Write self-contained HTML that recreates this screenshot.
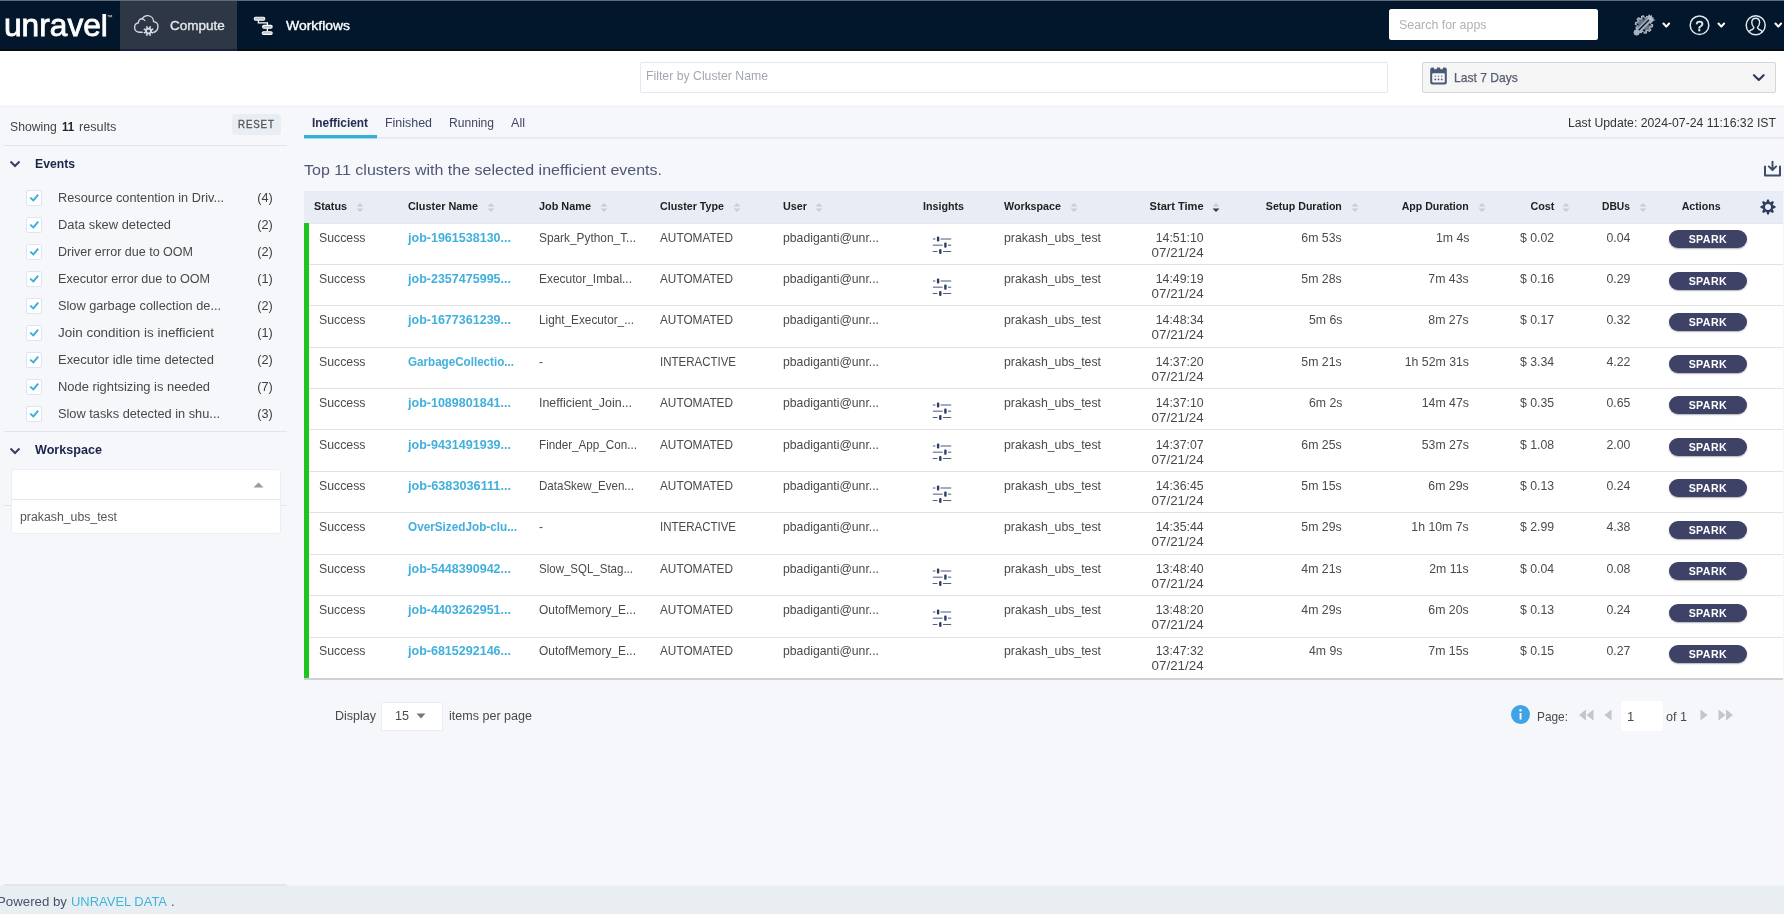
<!DOCTYPE html>
<html lang="en"><head><meta charset="utf-8"><title>Unravel - Compute</title>
<style>
html,body{margin:0;padding:0}
body{width:1784px;height:914px;position:relative;overflow:hidden;background:#f5f7fb;font-family:"Liberation Sans",Arial,sans-serif}
.t{position:absolute;white-space:nowrap;line-height:1;display:block;filter:blur(.35px)}
svg.b{filter:blur(.3px)}
.b{position:absolute;display:block}
</style></head><body>
<div class="b" style="left:0px;top:0px;width:1784px;height:51px;background:#02172c;"></div>
<div class="b" style="left:0px;top:0px;width:1784px;height:1px;background:#5f6b78;"></div>
<div class="b" style="left:120px;top:1px;width:117px;height:48px;background:#2e3745;"></div>
<div class="b" style="left:0px;top:49px;width:1784px;height:2px;background:#070e14;"></div>
<div class="b" style="left:120px;top:49px;width:117px;height:2px;background:#1b1c40;"></div>
<span class="t" style="top:10.00px;font-size:31px;color:#fff;left:3.90px;transform-origin:0 50%;transform:scaleX(1.0219);-webkit-text-stroke:0.8px #fff;">unravel</span>
<div class="b" style="left:100.5px;top:8px;width:5.8px;height:5.7px;background:#02172c;"></div>
<span class="t" style="top:13.92px;font-size:6px;color:#dfe3e8;left:106.50px;transform-origin:0 50%;">™</span>
<span class="t" style="top:19.00px;font-size:13px;color:#e4e7eb;left:170.00px;transform-origin:0 50%;transform:scaleX(1.0389);-webkit-text-stroke:0.35px #e4e7eb;">Compute</span>
<span class="t" style="top:19.00px;font-size:13px;color:#fff;left:286.00px;transform-origin:0 50%;transform:scaleX(1.0718);-webkit-text-stroke:0.35px #fff;">Workflows</span>
<div class="b" style="left:1389.3px;top:8.6px;width:208.6px;height:31.7px;background:#fff;border-radius:2.5px;"></div>
<span class="t" style="top:18.00px;font-size:13px;color:#b0b2b6;left:1399.00px;transform-origin:0 50%;transform:scaleX(0.9534);">Search for apps</span>
<div class="b" style="left:0px;top:51px;width:1784px;height:55px;background:#fff;"></div>
<div class="b" style="left:640px;top:62px;width:748px;height:31px;background:#fff;border:1px solid #e2e9f3;border-radius:2px;box-sizing:border-box;"></div>
<span class="t" style="top:69.00px;font-size:13px;color:#a3a8b0;left:646.00px;transform-origin:0 50%;transform:scaleX(0.9435);">Filter by Cluster Name</span>
<div class="b" style="left:1422px;top:62px;width:354px;height:31px;background:#f5f5f5;border:1px solid #d6d6d6;border-radius:2px;box-sizing:border-box;"></div>
<span class="t" style="top:71.00px;font-size:13px;color:#555b75;left:1454.30px;transform-origin:0 50%;transform:scaleX(0.9280);-webkit-text-stroke:0.25px #555b75;">Last 7 Days</span>
<div class="b" style="left:0px;top:106px;width:1784px;height:808px;background:#f5f7fb;"></div>
<div class="b" style="left:0px;top:105px;width:1784px;height:1px;background:#f4f6fa;"></div>
<div class="b" style="left:0px;top:106px;width:1784px;height:1px;background:#f1f3f8;"></div>
<div class="b" style="left:0px;top:885px;width:1784px;height:1px;background:#eff2f6;"></div>
<div class="b" style="left:0px;top:886px;width:1784px;height:28px;background:#e9eef2;"></div>
<div class="b" style="left:4px;top:884px;width:283px;height:2px;background:#e3e5ea;"></div>
<span class="t" style="top:895.00px;font-size:13px;color:#4a4f6a;left:-3.00px;transform-origin:0 50%;transform:scaleX(1.0196);">Powered by</span>
<span class="t" style="top:895.00px;font-size:13px;color:#3fb4dc;left:71.00px;transform-origin:0 50%;transform:scaleX(0.9967);">UNRAVEL DATA</span>
<span class="t" style="top:895.00px;font-size:13px;color:#4a4f6a;left:171.00px;transform-origin:0 50%;">.</span>
<span class="t" style="top:121.00px;font-size:12px;color:#444;left:10.40px;transform-origin:0 50%;transform:scaleX(1.0167);">Showing</span>
<span class="t" style="top:121.00px;font-size:12px;color:#222;font-weight:700;left:62.00px;transform-origin:0 50%;transform:scaleX(0.9459);">11</span>
<span class="t" style="top:121.00px;font-size:12px;color:#444;left:78.70px;transform-origin:0 50%;transform:scaleX(1.0553);">results</span>
<div class="b" style="left:232px;top:114px;width:49px;height:21px;background:#e9eef4;border-radius:3px;"></div>
<span class="t" style="top:119.00px;font-size:10.5px;color:#555;left:238.00px;transform-origin:0 50%;transform:scaleX(0.9300);letter-spacing:0.9px;-webkit-text-stroke:0.3px #555;">RESET</span>
<div class="b" style="left:4px;top:145px;width:283px;height:1px;background:#e2e5ea;"></div>
<span class="t" style="top:157.00px;font-size:13px;color:#1b2348;font-weight:700;left:34.50px;transform-origin:0 50%;transform:scaleX(0.9382);">Events</span>
<div class="b" style="left:26px;top:190px;width:16px;height:16px;background:#fff;border:1px solid #dfe5ef;box-sizing:border-box;border-radius:2px;"></div>
<svg class="b" style="left:28px;top:191px" width="13" height="13" viewBox="0 0 13 13"><path d="M2.2 6.6 L5.4 9.4 L10.2 3.7" fill="none" stroke="#35aedb" stroke-width="1.9"/></svg>
<span class="t" style="top:192.00px;font-size:12px;color:#484848;left:58.30px;transform-origin:0 50%;transform:scaleX(1.0606);">Resource contention in Driv...</span>
<span class="t" style="top:192.00px;font-size:12px;color:#404040;right:1511.00px;transform-origin:100% 50%;transform:scaleX(1.0568);">(4)</span>
<div class="b" style="left:26px;top:217px;width:16px;height:16px;background:#fff;border:1px solid #dfe5ef;box-sizing:border-box;border-radius:2px;"></div>
<svg class="b" style="left:28px;top:218px" width="13" height="13" viewBox="0 0 13 13"><path d="M2.2 6.6 L5.4 9.4 L10.2 3.7" fill="none" stroke="#35aedb" stroke-width="1.9"/></svg>
<span class="t" style="top:219.00px;font-size:12px;color:#484848;left:58.30px;transform-origin:0 50%;transform:scaleX(1.0722);">Data skew detected</span>
<span class="t" style="top:219.00px;font-size:12px;color:#404040;right:1511.00px;transform-origin:100% 50%;transform:scaleX(1.0568);">(2)</span>
<div class="b" style="left:26px;top:244px;width:16px;height:16px;background:#fff;border:1px solid #dfe5ef;box-sizing:border-box;border-radius:2px;"></div>
<svg class="b" style="left:28px;top:245px" width="13" height="13" viewBox="0 0 13 13"><path d="M2.2 6.6 L5.4 9.4 L10.2 3.7" fill="none" stroke="#35aedb" stroke-width="1.9"/></svg>
<span class="t" style="top:246.00px;font-size:12px;color:#484848;left:58.30px;transform-origin:0 50%;transform:scaleX(1.0435);">Driver error due to OOM</span>
<span class="t" style="top:246.00px;font-size:12px;color:#404040;right:1511.00px;transform-origin:100% 50%;transform:scaleX(1.0568);">(2)</span>
<div class="b" style="left:26px;top:271px;width:16px;height:16px;background:#fff;border:1px solid #dfe5ef;box-sizing:border-box;border-radius:2px;"></div>
<svg class="b" style="left:28px;top:272px" width="13" height="13" viewBox="0 0 13 13"><path d="M2.2 6.6 L5.4 9.4 L10.2 3.7" fill="none" stroke="#35aedb" stroke-width="1.9"/></svg>
<span class="t" style="top:273.00px;font-size:12px;color:#484848;left:58.30px;transform-origin:0 50%;transform:scaleX(1.0503);">Executor error due to OOM</span>
<span class="t" style="top:273.00px;font-size:12px;color:#404040;right:1511.00px;transform-origin:100% 50%;transform:scaleX(1.0568);">(1)</span>
<div class="b" style="left:26px;top:298px;width:16px;height:16px;background:#fff;border:1px solid #dfe5ef;box-sizing:border-box;border-radius:2px;"></div>
<svg class="b" style="left:28px;top:299px" width="13" height="13" viewBox="0 0 13 13"><path d="M2.2 6.6 L5.4 9.4 L10.2 3.7" fill="none" stroke="#35aedb" stroke-width="1.9"/></svg>
<span class="t" style="top:300.00px;font-size:12px;color:#484848;left:58.30px;transform-origin:0 50%;transform:scaleX(1.0624);">Slow garbage collection de...</span>
<span class="t" style="top:300.00px;font-size:12px;color:#404040;right:1511.00px;transform-origin:100% 50%;transform:scaleX(1.0568);">(2)</span>
<div class="b" style="left:26px;top:325px;width:16px;height:16px;background:#fff;border:1px solid #dfe5ef;box-sizing:border-box;border-radius:2px;"></div>
<svg class="b" style="left:28px;top:326px" width="13" height="13" viewBox="0 0 13 13"><path d="M2.2 6.6 L5.4 9.4 L10.2 3.7" fill="none" stroke="#35aedb" stroke-width="1.9"/></svg>
<span class="t" style="top:327.00px;font-size:12px;color:#484848;left:58.30px;transform-origin:0 50%;transform:scaleX(1.1207);">Join condition is inefficient</span>
<span class="t" style="top:327.00px;font-size:12px;color:#404040;right:1511.00px;transform-origin:100% 50%;transform:scaleX(1.0568);">(1)</span>
<div class="b" style="left:26px;top:352px;width:16px;height:16px;background:#fff;border:1px solid #dfe5ef;box-sizing:border-box;border-radius:2px;"></div>
<svg class="b" style="left:28px;top:353px" width="13" height="13" viewBox="0 0 13 13"><path d="M2.2 6.6 L5.4 9.4 L10.2 3.7" fill="none" stroke="#35aedb" stroke-width="1.9"/></svg>
<span class="t" style="top:354.00px;font-size:12px;color:#484848;left:58.30px;transform-origin:0 50%;transform:scaleX(1.0777);">Executor idle time detected</span>
<span class="t" style="top:354.00px;font-size:12px;color:#404040;right:1511.00px;transform-origin:100% 50%;transform:scaleX(1.0568);">(2)</span>
<div class="b" style="left:26px;top:379px;width:16px;height:16px;background:#fff;border:1px solid #dfe5ef;box-sizing:border-box;border-radius:2px;"></div>
<svg class="b" style="left:28px;top:380px" width="13" height="13" viewBox="0 0 13 13"><path d="M2.2 6.6 L5.4 9.4 L10.2 3.7" fill="none" stroke="#35aedb" stroke-width="1.9"/></svg>
<span class="t" style="top:381.00px;font-size:12px;color:#484848;left:58.30px;transform-origin:0 50%;transform:scaleX(1.0748);">Node rightsizing is needed</span>
<span class="t" style="top:381.00px;font-size:12px;color:#404040;right:1511.00px;transform-origin:100% 50%;transform:scaleX(1.0568);">(7)</span>
<div class="b" style="left:26px;top:406px;width:16px;height:16px;background:#fff;border:1px solid #dfe5ef;box-sizing:border-box;border-radius:2px;"></div>
<svg class="b" style="left:28px;top:407px" width="13" height="13" viewBox="0 0 13 13"><path d="M2.2 6.6 L5.4 9.4 L10.2 3.7" fill="none" stroke="#35aedb" stroke-width="1.9"/></svg>
<span class="t" style="top:408.00px;font-size:12px;color:#484848;left:58.30px;transform-origin:0 50%;transform:scaleX(1.0652);">Slow tasks detected in shu...</span>
<span class="t" style="top:408.00px;font-size:12px;color:#404040;right:1511.00px;transform-origin:100% 50%;transform:scaleX(1.0568);">(3)</span>
<div class="b" style="left:4px;top:431px;width:283px;height:1px;background:#e2e5ea;"></div>
<span class="t" style="top:443.00px;font-size:13px;color:#1b2348;font-weight:700;left:34.50px;transform-origin:0 50%;transform:scaleX(0.9692);">Workspace</span>
<svg class="b" style="left:9px;top:159px" width="12" height="10" viewBox="0 0 12 10"><path d="M1.5 2.5 L6 7 L10.5 2.5" fill="none" stroke="#353f60" stroke-width="2"/></svg>
<svg class="b" style="left:9px;top:446px" width="12" height="10" viewBox="0 0 12 10"><path d="M1.5 2.5 L6 7 L10.5 2.5" fill="none" stroke="#353f60" stroke-width="2"/></svg>
<div class="b" style="left:4px;top:505px;width:283px;height:1px;background:#e2e5ea;"></div>
<div class="b" style="left:11px;top:469px;width:270px;height:65px;background:#fff;border:1px solid #eceff4;box-sizing:border-box;border-radius:3px;"></div>
<div class="b" style="left:11px;top:499px;width:270px;height:1px;background:#e3e6ea;"></div>
<svg class="b" style="left:253px;top:482px" width="11" height="6" viewBox="0 0 11 6"><path d="M0.5 5.5 L5.5 0.5 L10.5 5.5 Z" fill="#9a9a9a"/></svg>
<span class="t" style="top:511.00px;font-size:12.5px;color:#555;left:19.50px;transform-origin:0 50%;transform:scaleX(0.9830);">prakash_ubs_test</span>
<div class="b" style="left:304px;top:137px;width:1480px;height:1px;background:#e5e7ec;"></div>
<div class="b" style="left:304px;top:138px;width:1480px;height:1px;background:#eceef3;"></div>
<div class="b" style="left:304px;top:135px;width:73px;height:3px;background:#36afda;"></div>
<div class="b" style="left:304px;top:138px;width:73px;height:1px;background:#a5d8ec;"></div>
<span class="t" style="top:117.00px;font-size:12px;color:#262d52;font-weight:700;left:312.00px;transform-origin:0 50%;transform:scaleX(0.9881);">Inefficient</span>
<span class="t" style="top:117.00px;font-size:12px;color:#3f4666;left:385.00px;transform-origin:0 50%;transform:scaleX(1.0362);">Finished</span>
<span class="t" style="top:117.00px;font-size:12px;color:#3f4666;left:449.00px;transform-origin:0 50%;transform:scaleX(1.0066);">Running</span>
<span class="t" style="top:117.00px;font-size:12px;color:#3f4666;left:511.00px;transform-origin:0 50%;transform:scaleX(1.0497);">All</span>
<span class="t" style="top:117.00px;font-size:12px;color:#333;right:8.00px;transform-origin:100% 50%;transform:scaleX(1.0200);">Last Update: 2024-07-24 11:16:32 IST</span>
<span class="t" style="top:162.00px;font-size:15px;color:#4f5676;left:304.00px;transform-origin:0 50%;transform:scaleX(1.0672);">Top 11 clusters with the selected inefficient events.</span>
<div class="b" style="left:304px;top:191px;width:1480px;height:32px;background:#e8edf5;"></div>
<div class="b" style="left:304px;top:223px;width:1480px;height:456px;background:#fff;"></div>
<div class="b" style="left:304px;top:223px;width:1480px;height:1px;background:#e3e7ee;"></div>
<div class="b" style="left:304px;top:223px;width:5px;height:1px;background:#7ed07e;"></div>
<div class="b" style="left:304px;top:223px;width:5px;height:456px;background:#1fc41f;"></div>
<div class="b" style="left:304px;top:678px;width:1480px;height:2px;background:#d0d0d0;"></div>
<span class="t" style="top:201.00px;font-size:11px;color:#222;font-weight:700;left:314.00px;transform-origin:0 50%;transform:scaleX(0.9816);">Status</span>
<svg class="b" style="left:356px;top:202px" width="8" height="11" viewBox="0 0 8 11"><path d="M0.5 4.5 L4 1 L7.5 4.5 Z" fill="#c9ccd3"/><path d="M0.5 6.5 L4 10 L7.5 6.5 Z" fill="#c9ccd3"/></svg>
<span class="t" style="top:201.00px;font-size:11px;color:#222;font-weight:700;left:408.00px;transform-origin:0 50%;transform:scaleX(0.9871);">Cluster Name</span>
<svg class="b" style="left:487px;top:202px" width="8" height="11" viewBox="0 0 8 11"><path d="M0.5 4.5 L4 1 L7.5 4.5 Z" fill="#c9ccd3"/><path d="M0.5 6.5 L4 10 L7.5 6.5 Z" fill="#c9ccd3"/></svg>
<span class="t" style="top:201.00px;font-size:11px;color:#222;font-weight:700;left:539.00px;transform-origin:0 50%;transform:scaleX(0.9891);">Job Name</span>
<svg class="b" style="left:600px;top:202px" width="8" height="11" viewBox="0 0 8 11"><path d="M0.5 4.5 L4 1 L7.5 4.5 Z" fill="#c9ccd3"/><path d="M0.5 6.5 L4 10 L7.5 6.5 Z" fill="#c9ccd3"/></svg>
<span class="t" style="top:201.00px;font-size:11px;color:#222;font-weight:700;left:660.00px;transform-origin:0 50%;transform:scaleX(0.9724);">Cluster Type</span>
<svg class="b" style="left:733px;top:202px" width="8" height="11" viewBox="0 0 8 11"><path d="M0.5 4.5 L4 1 L7.5 4.5 Z" fill="#c9ccd3"/><path d="M0.5 6.5 L4 10 L7.5 6.5 Z" fill="#c9ccd3"/></svg>
<span class="t" style="top:201.00px;font-size:11px;color:#222;font-weight:700;left:783.00px;transform-origin:0 50%;transform:scaleX(0.9812);">User</span>
<svg class="b" style="left:815px;top:202px" width="8" height="11" viewBox="0 0 8 11"><path d="M0.5 4.5 L4 1 L7.5 4.5 Z" fill="#c9ccd3"/><path d="M0.5 6.5 L4 10 L7.5 6.5 Z" fill="#c9ccd3"/></svg>
<span class="t" style="top:201.00px;font-size:11px;color:#222;font-weight:700;left:923.00px;transform-origin:0 50%;transform:scaleX(0.9723);">Insights</span>
<span class="t" style="top:201.00px;font-size:11px;color:#222;font-weight:700;left:1004.00px;transform-origin:0 50%;transform:scaleX(0.9745);">Workspace</span>
<svg class="b" style="left:1070px;top:202px" width="8" height="11" viewBox="0 0 8 11"><path d="M0.5 4.5 L4 1 L7.5 4.5 Z" fill="#c9ccd3"/><path d="M0.5 6.5 L4 10 L7.5 6.5 Z" fill="#c9ccd3"/></svg>
<span class="t" style="top:201.00px;font-size:11px;color:#222;font-weight:700;right:580.00px;transform-origin:100% 50%;transform:scaleX(1.0076);">Start Time</span>
<svg class="b" style="left:1212px;top:202px" width="8" height="11" viewBox="0 0 8 11"><path d="M0.5 4.5 L4 1 L7.5 4.5 Z" fill="#c9ccd3"/><path d="M0.5 6.5 L4 10 L7.5 6.5 Z" fill="#2e365a"/></svg>
<span class="t" style="top:201.00px;font-size:11px;color:#222;font-weight:700;right:442.00px;transform-origin:100% 50%;transform:scaleX(0.9641);">Setup Duration</span>
<svg class="b" style="left:1351px;top:202px" width="8" height="11" viewBox="0 0 8 11"><path d="M0.5 4.5 L4 1 L7.5 4.5 Z" fill="#c9ccd3"/><path d="M0.5 6.5 L4 10 L7.5 6.5 Z" fill="#c9ccd3"/></svg>
<span class="t" style="top:201.00px;font-size:11px;color:#222;font-weight:700;right:315.00px;transform-origin:100% 50%;transform:scaleX(0.9618);">App Duration</span>
<svg class="b" style="left:1478px;top:202px" width="8" height="11" viewBox="0 0 8 11"><path d="M0.5 4.5 L4 1 L7.5 4.5 Z" fill="#c9ccd3"/><path d="M0.5 6.5 L4 10 L7.5 6.5 Z" fill="#c9ccd3"/></svg>
<span class="t" style="top:201.00px;font-size:11px;color:#222;font-weight:700;right:230.00px;transform-origin:100% 50%;transform:scaleX(0.9818);">Cost</span>
<svg class="b" style="left:1562px;top:202px" width="8" height="11" viewBox="0 0 8 11"><path d="M0.5 4.5 L4 1 L7.5 4.5 Z" fill="#c9ccd3"/><path d="M0.5 6.5 L4 10 L7.5 6.5 Z" fill="#c9ccd3"/></svg>
<span class="t" style="top:201.00px;font-size:11px;color:#222;font-weight:700;right:154.00px;transform-origin:100% 50%;transform:scaleX(0.9349);">DBUs</span>
<svg class="b" style="left:1639px;top:202px" width="8" height="11" viewBox="0 0 8 11"><path d="M0.5 4.5 L4 1 L7.5 4.5 Z" fill="#c9ccd3"/><path d="M0.5 6.5 L4 10 L7.5 6.5 Z" fill="#c9ccd3"/></svg>
<span class="t" style="top:201.00px;font-size:11px;color:#222;font-weight:700;left:1680.83px;transform-origin:50% 50%;transform:scaleX(0.9668);">Actions</span>
<span class="t" style="top:231.00px;font-size:13px;color:#4a4a4a;left:319.00px;transform-origin:0 50%;transform:scaleX(0.9450);">Success</span>
<span class="t" style="top:231.00px;font-size:13px;color:#41b0dc;font-weight:700;left:408.00px;transform-origin:0 50%;transform:scaleX(0.9630);">job-1961538130...</span>
<span class="t" style="top:231.00px;font-size:13px;color:#4a4a4a;left:539.00px;transform-origin:0 50%;transform:scaleX(0.9131);">Spark_Python_T...</span>
<span class="t" style="top:231.00px;font-size:13px;color:#4a4a4a;left:660.00px;transform-origin:0 50%;transform:scaleX(0.9078);">AUTOMATED</span>
<span class="t" style="top:231.00px;font-size:13px;color:#4a4a4a;left:783.00px;transform-origin:0 50%;transform:scaleX(0.9402);">pbadiganti@unr...</span>
<span class="t" style="top:231.00px;font-size:13px;color:#4a4a4a;left:1004.00px;transform-origin:0 50%;transform:scaleX(0.9452);">prakash_ubs_test</span>
<span class="t" style="top:231.00px;font-size:13px;color:#4a4a4a;right:580.00px;transform-origin:100% 50%;transform:scaleX(0.9450);">14:51:10</span>
<span class="t" style="top:246.00px;font-size:13px;color:#4a4a4a;right:580.00px;transform-origin:100% 50%;transform:scaleX(1.0276);">07/21/24</span>
<span class="t" style="top:231.00px;font-size:13px;color:#4a4a4a;right:442.00px;transform-origin:100% 50%;transform:scaleX(0.9450);">6m 53s</span>
<span class="t" style="top:231.00px;font-size:13px;color:#4a4a4a;right:315.00px;transform-origin:100% 50%;transform:scaleX(0.9450);">1m 4s</span>
<span class="t" style="top:231.00px;font-size:13px;color:#4a4a4a;right:230.00px;transform-origin:100% 50%;transform:scaleX(0.9450);">$ 0.02</span>
<span class="t" style="top:231.00px;font-size:13px;color:#4a4a4a;right:154.00px;transform-origin:100% 50%;transform:scaleX(0.9450);">0.04</span>
<div class="b" style="left:1668.5px;top:230px;width:78px;height:18px;background:#3d4266;border-radius:9px;box-shadow:0 1px 1.5px rgba(0,0,0,.3);"></div>
<span class="t" style="top:234.00px;font-size:11px;color:#fff;font-weight:700;left:1688.35px;transform-origin:50% 50%;transform:scaleX(0.9684);letter-spacing:0.4px;">SPARK</span>
<svg class="b" style="left:932px;top:236px" width="20" height="19" viewBox="0 0 20 19"><g stroke="#8790a6" stroke-width="1.4" fill="none"><path d="M0.9 3H3.4M8.6 3H19.2M0.9 9.2H10.6M16 9.2H19.2"/><path d="M0.7 15.5H5.4M11 15.5H19.2" stroke="#525d7c" stroke-width="1.2"/></g><g fill="#2b3c66"><rect x="4.9" y="0.4" width="2.4" height="5.2" rx="1"/><rect x="12.2" y="6.6" width="2.4" height="5.2" rx="1"/><rect x="7.1" y="12.9" width="2.4" height="5.2" rx="1"/></g></svg>
<div class="b" style="left:309px;top:264px;width:1475px;height:1px;background:#e2e2e2;"></div>
<span class="t" style="top:272.00px;font-size:13px;color:#4a4a4a;left:319.00px;transform-origin:0 50%;transform:scaleX(0.9450);">Success</span>
<span class="t" style="top:272.00px;font-size:13px;color:#41b0dc;font-weight:700;left:408.00px;transform-origin:0 50%;transform:scaleX(0.9630);">job-2357475995...</span>
<span class="t" style="top:272.00px;font-size:13px;color:#4a4a4a;left:539.00px;transform-origin:0 50%;transform:scaleX(0.9194);">Executor_Imbal...</span>
<span class="t" style="top:272.00px;font-size:13px;color:#4a4a4a;left:660.00px;transform-origin:0 50%;transform:scaleX(0.9078);">AUTOMATED</span>
<span class="t" style="top:272.00px;font-size:13px;color:#4a4a4a;left:783.00px;transform-origin:0 50%;transform:scaleX(0.9402);">pbadiganti@unr...</span>
<span class="t" style="top:272.00px;font-size:13px;color:#4a4a4a;left:1004.00px;transform-origin:0 50%;transform:scaleX(0.9452);">prakash_ubs_test</span>
<span class="t" style="top:272.00px;font-size:13px;color:#4a4a4a;right:580.00px;transform-origin:100% 50%;transform:scaleX(0.9450);">14:49:19</span>
<span class="t" style="top:287.00px;font-size:13px;color:#4a4a4a;right:580.00px;transform-origin:100% 50%;transform:scaleX(1.0276);">07/21/24</span>
<span class="t" style="top:272.00px;font-size:13px;color:#4a4a4a;right:442.00px;transform-origin:100% 50%;transform:scaleX(0.9450);">5m 28s</span>
<span class="t" style="top:272.00px;font-size:13px;color:#4a4a4a;right:315.00px;transform-origin:100% 50%;transform:scaleX(0.9450);">7m 43s</span>
<span class="t" style="top:272.00px;font-size:13px;color:#4a4a4a;right:230.00px;transform-origin:100% 50%;transform:scaleX(0.9450);">$ 0.16</span>
<span class="t" style="top:272.00px;font-size:13px;color:#4a4a4a;right:154.00px;transform-origin:100% 50%;transform:scaleX(0.9450);">0.29</span>
<div class="b" style="left:1668.5px;top:272px;width:78px;height:18px;background:#3d4266;border-radius:9px;box-shadow:0 1px 1.5px rgba(0,0,0,.3);"></div>
<span class="t" style="top:276.00px;font-size:11px;color:#fff;font-weight:700;left:1688.35px;transform-origin:50% 50%;transform:scaleX(0.9684);letter-spacing:0.4px;">SPARK</span>
<svg class="b" style="left:932px;top:278px" width="20" height="19" viewBox="0 0 20 19"><g stroke="#8790a6" stroke-width="1.4" fill="none"><path d="M0.9 3H3.4M8.6 3H19.2M0.9 9.2H10.6M16 9.2H19.2"/><path d="M0.7 15.5H5.4M11 15.5H19.2" stroke="#525d7c" stroke-width="1.2"/></g><g fill="#2b3c66"><rect x="4.9" y="0.4" width="2.4" height="5.2" rx="1"/><rect x="12.2" y="6.6" width="2.4" height="5.2" rx="1"/><rect x="7.1" y="12.9" width="2.4" height="5.2" rx="1"/></g></svg>
<div class="b" style="left:309px;top:305px;width:1475px;height:1px;background:#e2e2e2;"></div>
<span class="t" style="top:313.00px;font-size:13px;color:#4a4a4a;left:319.00px;transform-origin:0 50%;transform:scaleX(0.9450);">Success</span>
<span class="t" style="top:313.00px;font-size:13px;color:#41b0dc;font-weight:700;left:408.00px;transform-origin:0 50%;transform:scaleX(0.9630);">job-1677361239...</span>
<span class="t" style="top:313.00px;font-size:13px;color:#4a4a4a;left:539.00px;transform-origin:0 50%;transform:scaleX(0.9066);">Light_Executor_...</span>
<span class="t" style="top:313.00px;font-size:13px;color:#4a4a4a;left:660.00px;transform-origin:0 50%;transform:scaleX(0.9078);">AUTOMATED</span>
<span class="t" style="top:313.00px;font-size:13px;color:#4a4a4a;left:783.00px;transform-origin:0 50%;transform:scaleX(0.9402);">pbadiganti@unr...</span>
<span class="t" style="top:313.00px;font-size:13px;color:#4a4a4a;left:1004.00px;transform-origin:0 50%;transform:scaleX(0.9452);">prakash_ubs_test</span>
<span class="t" style="top:313.00px;font-size:13px;color:#4a4a4a;right:580.00px;transform-origin:100% 50%;transform:scaleX(0.9450);">14:48:34</span>
<span class="t" style="top:328.00px;font-size:13px;color:#4a4a4a;right:580.00px;transform-origin:100% 50%;transform:scaleX(1.0276);">07/21/24</span>
<span class="t" style="top:313.00px;font-size:13px;color:#4a4a4a;right:442.00px;transform-origin:100% 50%;transform:scaleX(0.9450);">5m 6s</span>
<span class="t" style="top:313.00px;font-size:13px;color:#4a4a4a;right:315.00px;transform-origin:100% 50%;transform:scaleX(0.9450);">8m 27s</span>
<span class="t" style="top:313.00px;font-size:13px;color:#4a4a4a;right:230.00px;transform-origin:100% 50%;transform:scaleX(0.9450);">$ 0.17</span>
<span class="t" style="top:313.00px;font-size:13px;color:#4a4a4a;right:154.00px;transform-origin:100% 50%;transform:scaleX(0.9450);">0.32</span>
<div class="b" style="left:1668.5px;top:313px;width:78px;height:18px;background:#3d4266;border-radius:9px;box-shadow:0 1px 1.5px rgba(0,0,0,.3);"></div>
<span class="t" style="top:317.00px;font-size:11px;color:#fff;font-weight:700;left:1688.35px;transform-origin:50% 50%;transform:scaleX(0.9684);letter-spacing:0.4px;">SPARK</span>
<div class="b" style="left:309px;top:347px;width:1475px;height:1px;background:#e2e2e2;"></div>
<span class="t" style="top:355.00px;font-size:13px;color:#4a4a4a;left:319.00px;transform-origin:0 50%;transform:scaleX(0.9450);">Success</span>
<span class="t" style="top:355.00px;font-size:13px;color:#41b0dc;font-weight:700;left:408.00px;transform-origin:0 50%;transform:scaleX(0.8947);">GarbageCollectio...</span>
<span class="t" style="top:355.00px;font-size:13px;color:#4a4a4a;left:539.00px;transform-origin:0 50%;transform:scaleX(0.9239);">-</span>
<span class="t" style="top:355.00px;font-size:13px;color:#4a4a4a;left:660.00px;transform-origin:0 50%;transform:scaleX(0.8842);">INTERACTIVE</span>
<span class="t" style="top:355.00px;font-size:13px;color:#4a4a4a;left:783.00px;transform-origin:0 50%;transform:scaleX(0.9402);">pbadiganti@unr...</span>
<span class="t" style="top:355.00px;font-size:13px;color:#4a4a4a;left:1004.00px;transform-origin:0 50%;transform:scaleX(0.9452);">prakash_ubs_test</span>
<span class="t" style="top:355.00px;font-size:13px;color:#4a4a4a;right:580.00px;transform-origin:100% 50%;transform:scaleX(0.9450);">14:37:20</span>
<span class="t" style="top:370.00px;font-size:13px;color:#4a4a4a;right:580.00px;transform-origin:100% 50%;transform:scaleX(1.0276);">07/21/24</span>
<span class="t" style="top:355.00px;font-size:13px;color:#4a4a4a;right:442.00px;transform-origin:100% 50%;transform:scaleX(0.9450);">5m 21s</span>
<span class="t" style="top:355.00px;font-size:13px;color:#4a4a4a;right:315.00px;transform-origin:100% 50%;transform:scaleX(0.9450);">1h 52m 31s</span>
<span class="t" style="top:355.00px;font-size:13px;color:#4a4a4a;right:230.00px;transform-origin:100% 50%;transform:scaleX(0.9450);">$ 3.34</span>
<span class="t" style="top:355.00px;font-size:13px;color:#4a4a4a;right:154.00px;transform-origin:100% 50%;transform:scaleX(0.9450);">4.22</span>
<div class="b" style="left:1668.5px;top:355px;width:78px;height:18px;background:#3d4266;border-radius:9px;box-shadow:0 1px 1.5px rgba(0,0,0,.3);"></div>
<span class="t" style="top:359.00px;font-size:11px;color:#fff;font-weight:700;left:1688.35px;transform-origin:50% 50%;transform:scaleX(0.9684);letter-spacing:0.4px;">SPARK</span>
<div class="b" style="left:309px;top:388px;width:1475px;height:1px;background:#e2e2e2;"></div>
<span class="t" style="top:396.00px;font-size:13px;color:#4a4a4a;left:319.00px;transform-origin:0 50%;transform:scaleX(0.9450);">Success</span>
<span class="t" style="top:396.00px;font-size:13px;color:#41b0dc;font-weight:700;left:408.00px;transform-origin:0 50%;transform:scaleX(0.9630);">job-1089801841...</span>
<span class="t" style="top:396.00px;font-size:13px;color:#4a4a4a;left:539.00px;transform-origin:0 50%;transform:scaleX(0.9556);">Inefficient_Join...</span>
<span class="t" style="top:396.00px;font-size:13px;color:#4a4a4a;left:660.00px;transform-origin:0 50%;transform:scaleX(0.9078);">AUTOMATED</span>
<span class="t" style="top:396.00px;font-size:13px;color:#4a4a4a;left:783.00px;transform-origin:0 50%;transform:scaleX(0.9402);">pbadiganti@unr...</span>
<span class="t" style="top:396.00px;font-size:13px;color:#4a4a4a;left:1004.00px;transform-origin:0 50%;transform:scaleX(0.9452);">prakash_ubs_test</span>
<span class="t" style="top:396.00px;font-size:13px;color:#4a4a4a;right:580.00px;transform-origin:100% 50%;transform:scaleX(0.9450);">14:37:10</span>
<span class="t" style="top:411.00px;font-size:13px;color:#4a4a4a;right:580.00px;transform-origin:100% 50%;transform:scaleX(1.0276);">07/21/24</span>
<span class="t" style="top:396.00px;font-size:13px;color:#4a4a4a;right:442.00px;transform-origin:100% 50%;transform:scaleX(0.9450);">6m 2s</span>
<span class="t" style="top:396.00px;font-size:13px;color:#4a4a4a;right:315.00px;transform-origin:100% 50%;transform:scaleX(0.9450);">14m 47s</span>
<span class="t" style="top:396.00px;font-size:13px;color:#4a4a4a;right:230.00px;transform-origin:100% 50%;transform:scaleX(0.9450);">$ 0.35</span>
<span class="t" style="top:396.00px;font-size:13px;color:#4a4a4a;right:154.00px;transform-origin:100% 50%;transform:scaleX(0.9450);">0.65</span>
<div class="b" style="left:1668.5px;top:396px;width:78px;height:18px;background:#3d4266;border-radius:9px;box-shadow:0 1px 1.5px rgba(0,0,0,.3);"></div>
<span class="t" style="top:400.00px;font-size:11px;color:#fff;font-weight:700;left:1688.35px;transform-origin:50% 50%;transform:scaleX(0.9684);letter-spacing:0.4px;">SPARK</span>
<svg class="b" style="left:932px;top:402px" width="20" height="19" viewBox="0 0 20 19"><g stroke="#8790a6" stroke-width="1.4" fill="none"><path d="M0.9 3H3.4M8.6 3H19.2M0.9 9.2H10.6M16 9.2H19.2"/><path d="M0.7 15.5H5.4M11 15.5H19.2" stroke="#525d7c" stroke-width="1.2"/></g><g fill="#2b3c66"><rect x="4.9" y="0.4" width="2.4" height="5.2" rx="1"/><rect x="12.2" y="6.6" width="2.4" height="5.2" rx="1"/><rect x="7.1" y="12.9" width="2.4" height="5.2" rx="1"/></g></svg>
<div class="b" style="left:309px;top:429px;width:1475px;height:1px;background:#e2e2e2;"></div>
<span class="t" style="top:438.00px;font-size:13px;color:#4a4a4a;left:319.00px;transform-origin:0 50%;transform:scaleX(0.9450);">Success</span>
<span class="t" style="top:438.00px;font-size:13px;color:#41b0dc;font-weight:700;left:408.00px;transform-origin:0 50%;transform:scaleX(0.9630);">job-9431491939...</span>
<span class="t" style="top:438.00px;font-size:13px;color:#4a4a4a;left:539.00px;transform-origin:0 50%;transform:scaleX(0.8980);">Finder_App_Con...</span>
<span class="t" style="top:438.00px;font-size:13px;color:#4a4a4a;left:660.00px;transform-origin:0 50%;transform:scaleX(0.9078);">AUTOMATED</span>
<span class="t" style="top:438.00px;font-size:13px;color:#4a4a4a;left:783.00px;transform-origin:0 50%;transform:scaleX(0.9402);">pbadiganti@unr...</span>
<span class="t" style="top:438.00px;font-size:13px;color:#4a4a4a;left:1004.00px;transform-origin:0 50%;transform:scaleX(0.9452);">prakash_ubs_test</span>
<span class="t" style="top:438.00px;font-size:13px;color:#4a4a4a;right:580.00px;transform-origin:100% 50%;transform:scaleX(0.9450);">14:37:07</span>
<span class="t" style="top:453.00px;font-size:13px;color:#4a4a4a;right:580.00px;transform-origin:100% 50%;transform:scaleX(1.0276);">07/21/24</span>
<span class="t" style="top:438.00px;font-size:13px;color:#4a4a4a;right:442.00px;transform-origin:100% 50%;transform:scaleX(0.9450);">6m 25s</span>
<span class="t" style="top:438.00px;font-size:13px;color:#4a4a4a;right:315.00px;transform-origin:100% 50%;transform:scaleX(0.9450);">53m 27s</span>
<span class="t" style="top:438.00px;font-size:13px;color:#4a4a4a;right:230.00px;transform-origin:100% 50%;transform:scaleX(0.9450);">$ 1.08</span>
<span class="t" style="top:438.00px;font-size:13px;color:#4a4a4a;right:154.00px;transform-origin:100% 50%;transform:scaleX(0.9450);">2.00</span>
<div class="b" style="left:1668.5px;top:438px;width:78px;height:18px;background:#3d4266;border-radius:9px;box-shadow:0 1px 1.5px rgba(0,0,0,.3);"></div>
<span class="t" style="top:442.00px;font-size:11px;color:#fff;font-weight:700;left:1688.35px;transform-origin:50% 50%;transform:scaleX(0.9684);letter-spacing:0.4px;">SPARK</span>
<svg class="b" style="left:932px;top:443px" width="20" height="19" viewBox="0 0 20 19"><g stroke="#8790a6" stroke-width="1.4" fill="none"><path d="M0.9 3H3.4M8.6 3H19.2M0.9 9.2H10.6M16 9.2H19.2"/><path d="M0.7 15.5H5.4M11 15.5H19.2" stroke="#525d7c" stroke-width="1.2"/></g><g fill="#2b3c66"><rect x="4.9" y="0.4" width="2.4" height="5.2" rx="1"/><rect x="12.2" y="6.6" width="2.4" height="5.2" rx="1"/><rect x="7.1" y="12.9" width="2.4" height="5.2" rx="1"/></g></svg>
<div class="b" style="left:309px;top:471px;width:1475px;height:1px;background:#e2e2e2;"></div>
<span class="t" style="top:479.00px;font-size:13px;color:#4a4a4a;left:319.00px;transform-origin:0 50%;transform:scaleX(0.9450);">Success</span>
<span class="t" style="top:479.00px;font-size:13px;color:#41b0dc;font-weight:700;left:408.00px;transform-origin:0 50%;transform:scaleX(0.9761);">job-6383036111...</span>
<span class="t" style="top:479.00px;font-size:13px;color:#4a4a4a;left:539.00px;transform-origin:0 50%;transform:scaleX(0.8883);">DataSkew_Even...</span>
<span class="t" style="top:479.00px;font-size:13px;color:#4a4a4a;left:660.00px;transform-origin:0 50%;transform:scaleX(0.9078);">AUTOMATED</span>
<span class="t" style="top:479.00px;font-size:13px;color:#4a4a4a;left:783.00px;transform-origin:0 50%;transform:scaleX(0.9402);">pbadiganti@unr...</span>
<span class="t" style="top:479.00px;font-size:13px;color:#4a4a4a;left:1004.00px;transform-origin:0 50%;transform:scaleX(0.9452);">prakash_ubs_test</span>
<span class="t" style="top:479.00px;font-size:13px;color:#4a4a4a;right:580.00px;transform-origin:100% 50%;transform:scaleX(0.9450);">14:36:45</span>
<span class="t" style="top:494.00px;font-size:13px;color:#4a4a4a;right:580.00px;transform-origin:100% 50%;transform:scaleX(1.0276);">07/21/24</span>
<span class="t" style="top:479.00px;font-size:13px;color:#4a4a4a;right:442.00px;transform-origin:100% 50%;transform:scaleX(0.9450);">5m 15s</span>
<span class="t" style="top:479.00px;font-size:13px;color:#4a4a4a;right:315.00px;transform-origin:100% 50%;transform:scaleX(0.9450);">6m 29s</span>
<span class="t" style="top:479.00px;font-size:13px;color:#4a4a4a;right:230.00px;transform-origin:100% 50%;transform:scaleX(0.9450);">$ 0.13</span>
<span class="t" style="top:479.00px;font-size:13px;color:#4a4a4a;right:154.00px;transform-origin:100% 50%;transform:scaleX(0.9450);">0.24</span>
<div class="b" style="left:1668.5px;top:479px;width:78px;height:18px;background:#3d4266;border-radius:9px;box-shadow:0 1px 1.5px rgba(0,0,0,.3);"></div>
<span class="t" style="top:483.00px;font-size:11px;color:#fff;font-weight:700;left:1688.35px;transform-origin:50% 50%;transform:scaleX(0.9684);letter-spacing:0.4px;">SPARK</span>
<svg class="b" style="left:932px;top:485px" width="20" height="19" viewBox="0 0 20 19"><g stroke="#8790a6" stroke-width="1.4" fill="none"><path d="M0.9 3H3.4M8.6 3H19.2M0.9 9.2H10.6M16 9.2H19.2"/><path d="M0.7 15.5H5.4M11 15.5H19.2" stroke="#525d7c" stroke-width="1.2"/></g><g fill="#2b3c66"><rect x="4.9" y="0.4" width="2.4" height="5.2" rx="1"/><rect x="12.2" y="6.6" width="2.4" height="5.2" rx="1"/><rect x="7.1" y="12.9" width="2.4" height="5.2" rx="1"/></g></svg>
<div class="b" style="left:309px;top:512px;width:1475px;height:1px;background:#e2e2e2;"></div>
<span class="t" style="top:520.00px;font-size:13px;color:#4a4a4a;left:319.00px;transform-origin:0 50%;transform:scaleX(0.9450);">Success</span>
<span class="t" style="top:520.00px;font-size:13px;color:#41b0dc;font-weight:700;left:408.00px;transform-origin:0 50%;transform:scaleX(0.9035);">OverSizedJob-clu...</span>
<span class="t" style="top:520.00px;font-size:13px;color:#4a4a4a;left:539.00px;transform-origin:0 50%;transform:scaleX(0.9239);">-</span>
<span class="t" style="top:520.00px;font-size:13px;color:#4a4a4a;left:660.00px;transform-origin:0 50%;transform:scaleX(0.8842);">INTERACTIVE</span>
<span class="t" style="top:520.00px;font-size:13px;color:#4a4a4a;left:783.00px;transform-origin:0 50%;transform:scaleX(0.9402);">pbadiganti@unr...</span>
<span class="t" style="top:520.00px;font-size:13px;color:#4a4a4a;left:1004.00px;transform-origin:0 50%;transform:scaleX(0.9452);">prakash_ubs_test</span>
<span class="t" style="top:520.00px;font-size:13px;color:#4a4a4a;right:580.00px;transform-origin:100% 50%;transform:scaleX(0.9450);">14:35:44</span>
<span class="t" style="top:535.00px;font-size:13px;color:#4a4a4a;right:580.00px;transform-origin:100% 50%;transform:scaleX(1.0276);">07/21/24</span>
<span class="t" style="top:520.00px;font-size:13px;color:#4a4a4a;right:442.00px;transform-origin:100% 50%;transform:scaleX(0.9450);">5m 29s</span>
<span class="t" style="top:520.00px;font-size:13px;color:#4a4a4a;right:315.00px;transform-origin:100% 50%;transform:scaleX(0.9450);">1h 10m 7s</span>
<span class="t" style="top:520.00px;font-size:13px;color:#4a4a4a;right:230.00px;transform-origin:100% 50%;transform:scaleX(0.9450);">$ 2.99</span>
<span class="t" style="top:520.00px;font-size:13px;color:#4a4a4a;right:154.00px;transform-origin:100% 50%;transform:scaleX(0.9450);">4.38</span>
<div class="b" style="left:1668.5px;top:521px;width:78px;height:18px;background:#3d4266;border-radius:9px;box-shadow:0 1px 1.5px rgba(0,0,0,.3);"></div>
<span class="t" style="top:525.00px;font-size:11px;color:#fff;font-weight:700;left:1688.35px;transform-origin:50% 50%;transform:scaleX(0.9684);letter-spacing:0.4px;">SPARK</span>
<div class="b" style="left:309px;top:554px;width:1475px;height:1px;background:#e2e2e2;"></div>
<span class="t" style="top:562.00px;font-size:13px;color:#4a4a4a;left:319.00px;transform-origin:0 50%;transform:scaleX(0.9450);">Success</span>
<span class="t" style="top:562.00px;font-size:13px;color:#41b0dc;font-weight:700;left:408.00px;transform-origin:0 50%;transform:scaleX(0.9630);">job-5448390942...</span>
<span class="t" style="top:562.00px;font-size:13px;color:#4a4a4a;left:539.00px;transform-origin:0 50%;transform:scaleX(0.8849);">Slow_SQL_Stag...</span>
<span class="t" style="top:562.00px;font-size:13px;color:#4a4a4a;left:660.00px;transform-origin:0 50%;transform:scaleX(0.9078);">AUTOMATED</span>
<span class="t" style="top:562.00px;font-size:13px;color:#4a4a4a;left:783.00px;transform-origin:0 50%;transform:scaleX(0.9402);">pbadiganti@unr...</span>
<span class="t" style="top:562.00px;font-size:13px;color:#4a4a4a;left:1004.00px;transform-origin:0 50%;transform:scaleX(0.9452);">prakash_ubs_test</span>
<span class="t" style="top:562.00px;font-size:13px;color:#4a4a4a;right:580.00px;transform-origin:100% 50%;transform:scaleX(0.9450);">13:48:40</span>
<span class="t" style="top:577.00px;font-size:13px;color:#4a4a4a;right:580.00px;transform-origin:100% 50%;transform:scaleX(1.0276);">07/21/24</span>
<span class="t" style="top:562.00px;font-size:13px;color:#4a4a4a;right:442.00px;transform-origin:100% 50%;transform:scaleX(0.9450);">4m 21s</span>
<span class="t" style="top:562.00px;font-size:13px;color:#4a4a4a;right:315.00px;transform-origin:100% 50%;transform:scaleX(0.9450);">2m 11s</span>
<span class="t" style="top:562.00px;font-size:13px;color:#4a4a4a;right:230.00px;transform-origin:100% 50%;transform:scaleX(0.9450);">$ 0.04</span>
<span class="t" style="top:562.00px;font-size:13px;color:#4a4a4a;right:154.00px;transform-origin:100% 50%;transform:scaleX(0.9450);">0.08</span>
<div class="b" style="left:1668.5px;top:562px;width:78px;height:18px;background:#3d4266;border-radius:9px;box-shadow:0 1px 1.5px rgba(0,0,0,.3);"></div>
<span class="t" style="top:566.00px;font-size:11px;color:#fff;font-weight:700;left:1688.35px;transform-origin:50% 50%;transform:scaleX(0.9684);letter-spacing:0.4px;">SPARK</span>
<svg class="b" style="left:932px;top:568px" width="20" height="19" viewBox="0 0 20 19"><g stroke="#8790a6" stroke-width="1.4" fill="none"><path d="M0.9 3H3.4M8.6 3H19.2M0.9 9.2H10.6M16 9.2H19.2"/><path d="M0.7 15.5H5.4M11 15.5H19.2" stroke="#525d7c" stroke-width="1.2"/></g><g fill="#2b3c66"><rect x="4.9" y="0.4" width="2.4" height="5.2" rx="1"/><rect x="12.2" y="6.6" width="2.4" height="5.2" rx="1"/><rect x="7.1" y="12.9" width="2.4" height="5.2" rx="1"/></g></svg>
<div class="b" style="left:309px;top:595px;width:1475px;height:1px;background:#e2e2e2;"></div>
<span class="t" style="top:603.00px;font-size:13px;color:#4a4a4a;left:319.00px;transform-origin:0 50%;transform:scaleX(0.9450);">Success</span>
<span class="t" style="top:603.00px;font-size:13px;color:#41b0dc;font-weight:700;left:408.00px;transform-origin:0 50%;transform:scaleX(0.9630);">job-4403262951...</span>
<span class="t" style="top:603.00px;font-size:13px;color:#4a4a4a;left:539.00px;transform-origin:0 50%;transform:scaleX(0.9196);">OutofMemory_E...</span>
<span class="t" style="top:603.00px;font-size:13px;color:#4a4a4a;left:660.00px;transform-origin:0 50%;transform:scaleX(0.9078);">AUTOMATED</span>
<span class="t" style="top:603.00px;font-size:13px;color:#4a4a4a;left:783.00px;transform-origin:0 50%;transform:scaleX(0.9402);">pbadiganti@unr...</span>
<span class="t" style="top:603.00px;font-size:13px;color:#4a4a4a;left:1004.00px;transform-origin:0 50%;transform:scaleX(0.9452);">prakash_ubs_test</span>
<span class="t" style="top:603.00px;font-size:13px;color:#4a4a4a;right:580.00px;transform-origin:100% 50%;transform:scaleX(0.9450);">13:48:20</span>
<span class="t" style="top:618.00px;font-size:13px;color:#4a4a4a;right:580.00px;transform-origin:100% 50%;transform:scaleX(1.0276);">07/21/24</span>
<span class="t" style="top:603.00px;font-size:13px;color:#4a4a4a;right:442.00px;transform-origin:100% 50%;transform:scaleX(0.9450);">4m 29s</span>
<span class="t" style="top:603.00px;font-size:13px;color:#4a4a4a;right:315.00px;transform-origin:100% 50%;transform:scaleX(0.9450);">6m 20s</span>
<span class="t" style="top:603.00px;font-size:13px;color:#4a4a4a;right:230.00px;transform-origin:100% 50%;transform:scaleX(0.9450);">$ 0.13</span>
<span class="t" style="top:603.00px;font-size:13px;color:#4a4a4a;right:154.00px;transform-origin:100% 50%;transform:scaleX(0.9450);">0.24</span>
<div class="b" style="left:1668.5px;top:604px;width:78px;height:18px;background:#3d4266;border-radius:9px;box-shadow:0 1px 1.5px rgba(0,0,0,.3);"></div>
<span class="t" style="top:608.00px;font-size:11px;color:#fff;font-weight:700;left:1688.35px;transform-origin:50% 50%;transform:scaleX(0.9684);letter-spacing:0.4px;">SPARK</span>
<svg class="b" style="left:932px;top:609px" width="20" height="19" viewBox="0 0 20 19"><g stroke="#8790a6" stroke-width="1.4" fill="none"><path d="M0.9 3H3.4M8.6 3H19.2M0.9 9.2H10.6M16 9.2H19.2"/><path d="M0.7 15.5H5.4M11 15.5H19.2" stroke="#525d7c" stroke-width="1.2"/></g><g fill="#2b3c66"><rect x="4.9" y="0.4" width="2.4" height="5.2" rx="1"/><rect x="12.2" y="6.6" width="2.4" height="5.2" rx="1"/><rect x="7.1" y="12.9" width="2.4" height="5.2" rx="1"/></g></svg>
<div class="b" style="left:309px;top:637px;width:1475px;height:1px;background:#e2e2e2;"></div>
<span class="t" style="top:644.00px;font-size:13px;color:#4a4a4a;left:319.00px;transform-origin:0 50%;transform:scaleX(0.9450);">Success</span>
<span class="t" style="top:644.00px;font-size:13px;color:#41b0dc;font-weight:700;left:408.00px;transform-origin:0 50%;transform:scaleX(0.9630);">job-6815292146...</span>
<span class="t" style="top:644.00px;font-size:13px;color:#4a4a4a;left:539.00px;transform-origin:0 50%;transform:scaleX(0.9196);">OutofMemory_E...</span>
<span class="t" style="top:644.00px;font-size:13px;color:#4a4a4a;left:660.00px;transform-origin:0 50%;transform:scaleX(0.9078);">AUTOMATED</span>
<span class="t" style="top:644.00px;font-size:13px;color:#4a4a4a;left:783.00px;transform-origin:0 50%;transform:scaleX(0.9402);">pbadiganti@unr...</span>
<span class="t" style="top:644.00px;font-size:13px;color:#4a4a4a;left:1004.00px;transform-origin:0 50%;transform:scaleX(0.9452);">prakash_ubs_test</span>
<span class="t" style="top:644.00px;font-size:13px;color:#4a4a4a;right:580.00px;transform-origin:100% 50%;transform:scaleX(0.9450);">13:47:32</span>
<span class="t" style="top:659.00px;font-size:13px;color:#4a4a4a;right:580.00px;transform-origin:100% 50%;transform:scaleX(1.0276);">07/21/24</span>
<span class="t" style="top:644.00px;font-size:13px;color:#4a4a4a;right:442.00px;transform-origin:100% 50%;transform:scaleX(0.9450);">4m 9s</span>
<span class="t" style="top:644.00px;font-size:13px;color:#4a4a4a;right:315.00px;transform-origin:100% 50%;transform:scaleX(0.9450);">7m 15s</span>
<span class="t" style="top:644.00px;font-size:13px;color:#4a4a4a;right:230.00px;transform-origin:100% 50%;transform:scaleX(0.9450);">$ 0.15</span>
<span class="t" style="top:644.00px;font-size:13px;color:#4a4a4a;right:154.00px;transform-origin:100% 50%;transform:scaleX(0.9450);">0.27</span>
<div class="b" style="left:1668.5px;top:645px;width:78px;height:18px;background:#3d4266;border-radius:9px;box-shadow:0 1px 1.5px rgba(0,0,0,.3);"></div>
<span class="t" style="top:649.00px;font-size:11px;color:#fff;font-weight:700;left:1688.35px;transform-origin:50% 50%;transform:scaleX(0.9684);letter-spacing:0.4px;">SPARK</span>
<div class="b" style="left:1783px;top:191px;width:1px;height:489px;background:#f5f7fb;"></div>
<span class="t" style="top:709.00px;font-size:13px;color:#4a4a4a;left:334.50px;transform-origin:0 50%;transform:scaleX(0.9619);">Display</span>
<div class="b" style="left:381px;top:702px;width:62px;height:29px;background:#fff;border:1px solid #e9ecf1;box-sizing:border-box;"></div>
<span class="t" style="top:709.00px;font-size:13px;color:#4a4a4a;left:395.00px;transform-origin:0 50%;transform:scaleX(0.9682);">15</span>
<svg class="b" style="left:416px;top:713px" width="10" height="6" viewBox="0 0 10 6"><path d="M0.5 0.5 L9.5 0.5 L5 5.5 Z" fill="#777"/></svg>
<span class="t" style="top:709.00px;font-size:13px;color:#4a4a4a;left:448.50px;transform-origin:0 50%;transform:scaleX(0.9652);">items per page</span>
<svg class="b" style="left:1511px;top:705px" width="19" height="19" viewBox="0 0 19 19"><circle cx="9.5" cy="9.5" r="9.5" fill="#3fa3e6"/><rect x="8.6" y="8" width="1.9" height="6.5" fill="#fff"/><circle cx="9.5" cy="5.3" r="1.2" fill="#fff"/></svg>
<span class="t" style="top:710.00px;font-size:13px;color:#4a4a4a;left:1537.00px;transform-origin:0 50%;transform:scaleX(0.9125);">Page:</span>
<div class="b" style="left:1621px;top:701px;width:42px;height:30px;background:#fff;"></div>
<span class="t" style="top:710.00px;font-size:13px;color:#4a4a4a;left:1627.00px;transform-origin:0 50%;">1</span>
<span class="t" style="top:710.00px;font-size:13px;color:#4a4a4a;left:1666.00px;transform-origin:0 50%;transform:scaleX(0.9685);">of 1</span>
<svg class="b" style="left:1578px;top:709px" width="16" height="12" viewBox="0 0 16 12"><path d="M8 0.5V11.5L1 6Z M15.5 0.5V11.5L8.5 6Z" fill="#c3c5cb"/></svg>
<svg class="b" style="left:1604px;top:709px" width="8" height="12" viewBox="0 0 8 12"><path d="M7.5 0.5V11.5L0.5 6Z" fill="#c3c5cb"/></svg>
<svg class="b" style="left:1700px;top:709px" width="8" height="12" viewBox="0 0 8 12"><path d="M0.5 0.5V11.5L7.5 6Z" fill="#c3c5cb"/></svg>
<svg class="b" style="left:1718px;top:709px" width="16" height="12" viewBox="0 0 16 12"><path d="M0.5 0.5V11.5L7.5 6Z M8 0.5V11.5L15 6Z" fill="#c3c5cb"/></svg>
<svg class="b" style="left:133px;top:14px" width="27" height="24" viewBox="0 0 27 24">
<path d="M9.2 18.2H6.6C3.6 18.2 1.6 16 1.6 13.4C1.6 10.9 3.4 9.2 5.4 8.9C5.3 6.5 7.1 4.6 9.3 4.8C10.4 2.5 12.7 1.4 15 1.6C18.4 1.9 20.6 4.6 20.6 7.6C23.2 7.9 25 9.9 25 12.6C25 15.6 22.9 18.2 20.4 18.2H21.6" fill="none" stroke="#d9dce2" stroke-width="1.35" stroke-linecap="round"/>
<path d="M9.3 4.8C10.3 4.9 11.3 5.6 11.8 6.6" fill="none" stroke="#d9dce2" stroke-width="1.2" stroke-linecap="round"/>
<path d="M18.86 17.51 L20.56 18.21 L19.93 19.72 L18.23 19.02 L17.52 19.73 L18.22 21.43 L16.71 22.06 L16.01 20.36 L14.99 20.36 L14.29 22.06 L12.78 21.43 L13.48 19.73 L12.77 19.02 L11.07 19.72 L10.44 18.21 L12.14 17.51 L12.14 16.49 L10.44 15.79 L11.07 14.28 L12.77 14.98 L13.48 14.27 L12.78 12.57 L14.29 11.94 L14.99 13.64 L16.01 13.64 L16.71 11.94 L18.22 12.57 L17.52 14.27 L18.23 14.98 L19.93 14.28 L20.56 15.79 L18.86 16.49ZM14.00 17.00a1.50 1.50 0 1 0 3.00 0a1.50 1.50 0 1 0 -3.00 0Z" fill="#d9dce2" fill-rule="evenodd"/>
</svg>
<svg class="b" style="left:253px;top:16px" width="21" height="20" viewBox="0 0 21 20">
<g fill="#b9bfc8" stroke="#fff" stroke-width="1.1">
<rect x="1.2" y="1.3" width="10.6" height="2.8" rx="1.4"/>
<rect x="9.6" y="9.4" width="9.6" height="2.8" rx="1.4"/>
<rect x="9.2" y="15.8" width="10" height="2.6" rx="1.3"/>
<path d="M5.4 4.4V6.8H14.4V9.4M14.4 12.2V15.8" fill="none" stroke-width="1.3"/>
</g></svg>
<svg class="b" style="left:1633px;top:12.5px" width="23" height="23" viewBox="0 0 23 23">
<path d="M17.79 11.30 L19.70 11.81 L19.37 13.97 L17.40 13.90 L16.67 15.35 L17.91 16.88 L16.38 18.44 L14.83 17.22 L13.39 17.97 L13.49 19.94 L11.33 20.29 L10.79 18.40 L9.19 18.15 L8.11 19.81 L6.16 18.83 L6.84 16.98 L5.68 15.84 L3.84 16.54 L2.84 14.60 L4.47 13.50 L4.21 11.90 L2.30 11.39 L2.63 9.23 L4.60 9.30 L5.33 7.85 L4.09 6.32 L5.62 4.76 L7.17 5.98 L8.61 5.23 L8.51 3.26 L10.67 2.91 L11.21 4.80 L12.81 5.05 L13.89 3.39 L15.84 4.37 L15.16 6.22 L16.32 7.36 L18.16 6.66 L19.16 8.60 L17.53 9.70Z" fill="#6f7d8e" stroke="#b4bdc8" stroke-width="1.1" stroke-linejoin="round"/>
<circle cx="11" cy="11.6" r="4.6" fill="none" stroke="#4c6f8c" stroke-width="1.4" opacity=".7"/>
<g fill="#02172c"><circle cx="10.6" cy="5.4" r="1"/><circle cx="4.6" cy="11.4" r="1"/><circle cx="16.8" cy="11.4" r="1"/><circle cx="11" cy="17.6" r="1.1"/></g>
<path d="M3.6 19.6L18.4 4.8" stroke="#a9b3bf" stroke-width="4.6" stroke-linecap="round"/>
<path d="M5.6 17.2L15.6 7.2" stroke="#0a1a2e" stroke-width="1.5" stroke-linecap="round"/>
<circle cx="3.6" cy="19.4" r="3" fill="#aab4c0"/>
<path d="M16.2 1.0A3.8 3.8 0 1 0 22.4 6.8L19.6 6.2L17.8 4.0Z" fill="#b4bdc8"/>
<circle cx="20.2" cy="3.2" r="1.2" fill="#02172c"/>
</svg>
<svg class="b" style="left:1662.3px;top:22px" width="9" height="7" viewBox="0 0 9 7"><path d="M1.5 1.5L4.3 4.6L7.1 1.5" fill="none" stroke="#fff" stroke-width="2" stroke-linecap="round" stroke-linejoin="round"/></svg>
<svg class="b" style="left:1716.5px;top:22px" width="9" height="7" viewBox="0 0 9 7"><path d="M1.5 1.5L4.3 4.6L7.1 1.5" fill="none" stroke="#fff" stroke-width="2" stroke-linecap="round" stroke-linejoin="round"/></svg>
<svg class="b" style="left:1774px;top:22px" width="9" height="7" viewBox="0 0 9 7"><path d="M1.5 1.5L4.3 4.6L7.1 1.5" fill="none" stroke="#fff" stroke-width="2" stroke-linecap="round" stroke-linejoin="round"/></svg>
<svg class="b" style="left:1688px;top:14px" width="23" height="23" viewBox="0 0 23 23">
<circle cx="11.5" cy="11.2" r="9.3" fill="none" stroke="#e3e6ea" stroke-width="1.5"/>
<text x="11.5" y="16.6" text-anchor="middle" font-family="Liberation Sans, Arial, sans-serif" font-size="14.5" font-weight="400" stroke="#e9ecef" stroke-width="0.5" fill="#e9ecef">?</text></svg>
<svg class="b" style="left:1744px;top:14px" width="23" height="23" viewBox="0 0 23 23">
<defs><clipPath id="uc"><circle cx="11.7" cy="11.2" r="9.3"/></clipPath></defs>
<circle cx="11.7" cy="11.2" r="9.5" fill="none" stroke="#e3e6ea" stroke-width="1.5"/>
<g clip-path="url(#uc)" fill="none" stroke="#e3e6ea" stroke-width="1.4">
<path d="M11.7 4.2C14.3 4.2 15.6 6.2 15.6 8.6C15.6 10.8 14.7 12.2 13.6 13.2C13.4 14.6 14.6 15.4 16.6 16.2C18.4 16.9 19 18 19 21H4.4C4.4 18 5 16.9 6.8 16.2C8.8 15.4 10 14.6 9.8 13.2C8.7 12.2 7.8 10.8 7.8 8.6C7.8 6.2 9.1 4.2 11.7 4.2Z"/>
</g></svg>
<svg class="b" style="left:1430px;top:67px" width="17" height="18" viewBox="0 0 17 18">
<path d="M2.2 0.6H3.6L4.6 2.2H6.4L7.2 0.6H9.8L10.6 2.2H12.4L13.4 0.6H14.8A2 2 0 0 1 16.8 2.6V15.6A2 2 0 0 1 14.8 17.6H2.2A2 2 0 0 1 0.2 15.6V2.6A2 2 0 0 1 2.2 0.6Z M3.2 6.2A1 1 0 0 0 2.2 7.2V14.6A1 1 0 0 0 3.2 15.6H13.8A1 1 0 0 0 14.8 14.6V7.2A1 1 0 0 0 13.8 6.2Z" fill="#4a5878" fill-rule="evenodd"/>
<g fill="#4a5878"><circle cx="5.3" cy="9.2" r=".8" opacity=".7"/><circle cx="8.5" cy="9.2" r=".8" opacity=".7"/><circle cx="11.7" cy="9.2" r=".8" opacity=".7"/><circle cx="5.3" cy="12.4" r=".9"/><circle cx="8.5" cy="12.4" r=".9"/><circle cx="11.7" cy="12.4" r=".9"/></g>
</svg>
<svg class="b" style="left:1752px;top:72.5px" width="14" height="10" viewBox="0 0 14 10"><path d="M2 2.2L6.8 7L11.6 2.2" fill="none" stroke="#2e3a5c" stroke-width="2.1" stroke-linecap="round" stroke-linejoin="round"/></svg>
<svg class="b" style="left:1763px;top:159.5px" width="19" height="18" viewBox="0 0 19 18">
<path d="M2 6.4V15.6H17V6.4" fill="none" stroke="#3f4b6b" stroke-width="2" stroke-linejoin="round" stroke-linecap="round"/>
<path d="M9.5 1.6V9.4M5.8 6.4L9.5 10L13.2 6.4" fill="none" stroke="#3f4b6b" stroke-width="1.9" stroke-linecap="round" stroke-linejoin="round"/></svg>
<svg class="b" style="left:1760.3px;top:199px" width="16" height="16" viewBox="0 0 16 16"><path d="M9.91 12.62 L8.77 15.56 L7.23 15.56 L6.09 12.62 L3.20 13.89 L2.11 12.80 L3.38 9.91 L0.44 8.77 L0.44 7.23 L3.38 6.09 L2.11 3.20 L3.20 2.11 L6.09 3.38 L7.23 0.44 L8.77 0.44 L9.91 3.38 L12.80 2.11 L13.89 3.20 L12.62 6.09 L15.56 7.23 L15.56 8.77 L12.62 9.91 L13.89 12.80 L12.80 13.89ZM5.00 8.00a3.00 3.00 0 1 0 6.00 0a3.00 3.00 0 1 0 -6.00 0Z" fill="#2e3a5c" fill-rule="evenodd"/></svg>
</body></html>
